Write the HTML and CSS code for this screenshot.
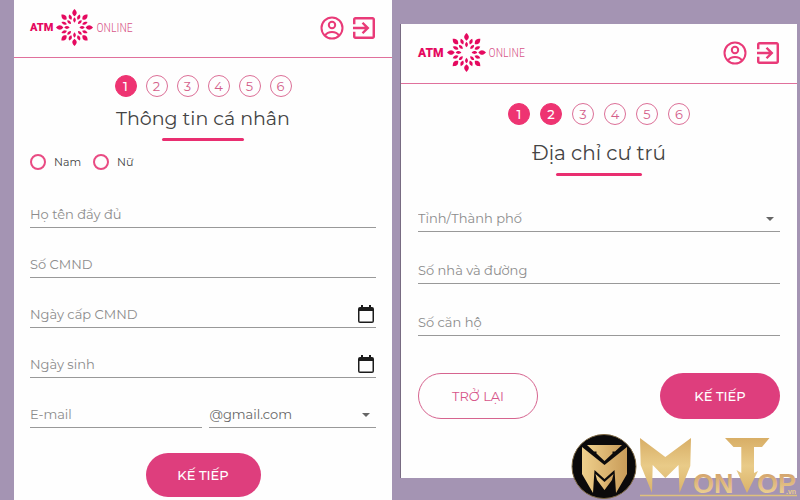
FILE: index.html
```html
<!DOCTYPE html>
<html lang="vi">
<head>
<meta charset="utf-8">
<meta name="viewport" content="width=device-width, initial-scale=1">
<title>ATM Online</title>
<link rel="stylesheet" href="styles.css">
</head>
<body>
<svg class="defs" aria-hidden="true">
  <defs>
    <g id="arm">
      <path d="M0-19C3-16 3-14 0-11.500C-3-14-3-16 0-19Z"/>
      <path d="M0-10.500C2-8.500 1.800-7 0-5C-1.800-7-2-8.500 0-10.500Z"/>
      <path transform="rotate(22.500)" d="M0-14.500C2.200-12 2-10.500 0-8.500C-2-10.500-2.200-12 0-14.500Z"/>
    </g>
    <symbol id="flower" viewBox="-19 -19 38 38">
      <use href="#arm"/>
      <use href="#arm" transform="rotate(45)"/>
      <use href="#arm" transform="rotate(90)"/>
      <use href="#arm" transform="rotate(135)"/>
      <use href="#arm" transform="rotate(180)"/>
      <use href="#arm" transform="rotate(225)"/>
      <use href="#arm" transform="rotate(270)"/>
      <use href="#arm" transform="rotate(315)"/>
    </symbol>
    <symbol id="user" viewBox="0 0 24 24">
      <g fill="none" stroke="currentColor" stroke-width="2">
        <circle cx="12" cy="12" r="10.500"/>
        <circle cx="12" cy="9" r="3.200"/>
        <path d="M5 19.500C8 14.800 16 14.800 19 19.500"/>
      </g>
    </symbol>
    <symbol id="exit" viewBox="3 3 18 18">
      <path fill="currentColor" d="M10.090 15.590L11.500 17l5-5-5-5-1.410 1.410L12.670 11H3v2h9.670l-2.580 2.590zM19 3H5c-1.110 0-2 .9-2 2v4h2V5h14v14H5v-4H3v4c0 1.100.890 2 2 2h14c1.100 0 2-.9 2-2V5c0-1.100-.9-2-2-2z"/>
    </symbol>
    <symbol id="calendar" viewBox="0 0 16 18">
      <path fill="currentColor" d="M2 2H3V0H5V2H11V0H13V2H14Q16 2 16 4V16Q16 18 14 18H2Q0 18 0 16V4Q0 2 2 2ZM1.500 6V16.500H14.500V6Z" fill-rule="evenodd"/>
    </symbol>
  </defs>
</svg>

<main class="screens">
  <section class="panel panel-personal">
    <header class="bar">
      <a class="brand" href="#" aria-label="ATM Online"><b>ATM</b><svg class="flower"><use href="#flower"/></svg><span>ONLINE</span></a>
      <nav class="actions">
        <button type="button" aria-label="Tài khoản"><svg><use href="#user"/></svg></button>
        <button type="button" aria-label="Thoát"><svg class="exit"><use href="#exit"/></svg></button>
      </nav>
    </header>
    <form class="form">
      <ol class="steps"><li class="done">1</li><li>2</li><li>3</li><li>4</li><li>5</li><li>6</li></ol>
      <h1>Thông tin cá nhân</h1>
      <div class="genders">
        <label><input type="radio" name="gender">Nam</label>
        <label><input type="radio" name="gender">Nữ</label>
      </div>
      <div class="field"><input type="text" aria-label="Họ tên đầy đủ" placeholder="Họ tên đầy đủ"></div>
      <div class="field"><input type="text" aria-label="Số CMND" placeholder="Số CMND"></div>
      <div class="field"><input type="text" aria-label="Ngày cấp CMND" placeholder="Ngày cấp CMND"><button class="pick" type="button" aria-label="Chọn ngày cấp"><svg><use href="#calendar"/></svg></button></div>
      <div class="field"><input type="text" aria-label="Ngày sinh" placeholder="Ngày sinh"><button class="pick" type="button" aria-label="Chọn ngày sinh"><svg><use href="#calendar"/></svg></button></div>
      <div class="pair">
        <div class="field"><input type="text" aria-label="E-mail" placeholder="E-mail"></div>
        <div class="field select"><select aria-label="Tên miền e-mail"><option>@gmail.com</option></select></div>
      </div>
      <div class="buttons center"><button class="btn primary" type="button">KẾ TIẾP</button></div>
    </form>
  </section>

  <section class="panel panel-address">
    <header class="bar">
      <a class="brand" href="#" aria-label="ATM Online"><b>ATM</b><svg class="flower"><use href="#flower"/></svg><span>ONLINE</span></a>
      <nav class="actions">
        <button type="button" aria-label="Tài khoản"><svg><use href="#user"/></svg></button>
        <button type="button" aria-label="Thoát"><svg class="exit"><use href="#exit"/></svg></button>
      </nav>
    </header>
    <form class="form">
      <ol class="steps"><li class="done">1</li><li class="done">2</li><li>3</li><li>4</li><li>5</li><li>6</li></ol>
      <h1>Địa chỉ cư trú</h1>
      <div class="field select empty"><select aria-label="Tỉnh/Thành phố"><option>Tỉnh/Thành phố</option></select></div>
      <div class="field"><input type="text" aria-label="Số nhà và đường" placeholder="Số nhà và đường"></div>
      <div class="field"><input type="text" aria-label="Số căn hộ" placeholder="Số căn hộ"></div>
      <div class="buttons"><button class="btn outline" type="button">TRỞ LẠI</button><button class="btn primary" type="button">KẾ TIẾP</button></div>
    </form>
  </section>
</main>

<svg class="watermark" viewBox="571 433 229 67" role="img" aria-label="MonTop.vn">
  <defs>
    <linearGradient id="gold" gradientUnits="userSpaceOnUse" x1="0" y1="438" x2="0" y2="494"><stop offset="0" stop-color="#d8ae66"/><stop offset=".5" stop-color="#e9cb88"/><stop offset="1" stop-color="#d9b168"/></linearGradient>
    <linearGradient id="word" gradientUnits="userSpaceOnUse" x1="0" y1="473" x2="0" y2="494"><stop offset="0" stop-color="#d3a36c"/><stop offset="1" stop-color="#ecd092"/></linearGradient>
    <linearGradient id="badge" x1="0" y1="0" x2="1" y2="0"><stop offset="0" stop-color="#efd08c"/><stop offset="1" stop-color="#c99c59"/></linearGradient>
  </defs>
  <circle cx="604" cy="466.500" r="32" fill="#0b0a0b" stroke="#7c6742"/>
  <g fill="url(#badge)">
    <path d="M587 445H622L615 451.500H612.500V453.500L604.500 461L596.500 453.500V451.500H594Z"/>
    <path d="M582 447L604.500 465L627 447V474L616 493L614.500 470L604.500 479L594.500 470L593 493L582 474Z"/>
    <path d="M595.500 474L604.500 482L613.500 474L612 480L604.500 490L597 480Z"/>
  </g>
  <g fill="url(#gold)">
    <path d="M640 438L665.300 457L691 438L690.300 466L679.500 493L678.500 465L665.300 478L652.700 465L652 493L640.700 465Z"/>
    <path d="M725 438H769.500L762 447H754V473L758 471L747 493L736.500 470L741.300 473V447H733.500Z"/>
  </g>
  <g class="wordmark" fill="url(#word)">
    <text x="693" y="493">ON</text>
    <text x="757" y="493">OP<tspan class="suffix" x="786" y="494">.vn</tspan></text>
  </g>
  <path d="M640 495.500H797" stroke="#dfc07c" stroke-width="1.500"/>
</svg>
</body>
</html>
```
FILE: styles.css
```css
* { box-sizing: border-box; }

body {
  margin: 0;
  background: #a494b3;
  color: #444;
  font-family: Montserrat, Inter, "Open Sans", sans-serif;
  font-size: 13px;
}

button, input, select { font: inherit; color: inherit; }
button { border: 0; padding: 0; background: none; cursor: pointer; }

.defs { position: absolute; width: 0; height: 0; }

.screens {
  display: grid;
  grid-template-columns: 378fr 396fr;
  gap: 9px;
  align-items: start;
  min-height: 100vh;
  padding: 0 3px 0 14px;
}

.panel { background: #fefefe; }
.panel-personal { min-height: 100vh; }
.panel-address { margin-top: 24px; box-shadow: -1px 0 #786b82; }

.bar {
  display: flex;
  align-items: center;
  justify-content: space-between;
  height: 58px;
  padding: 0 17px 2px 16px;
  border-bottom: 1px solid #e0709c;
}

.brand {
  display: flex;
  align-items: center;
  gap: 3px;
  color: #e5095f;
  text-decoration: none;
}
.brand b { font: 900 11px/16px Roboto, sans-serif; }
.brand span { font: 300 12px/16px "Roboto Condensed", Roboto, sans-serif; color: #d8558a; }
.flower { width: 37px; height: 37px; fill: #e5095f; }

.actions { display: flex; align-items: center; gap: 9px; color: #e93a78; }
.actions svg { display: block; width: 24px; height: 24px; }
.actions .exit { width: 22px; height: 22px; }

.form { display: flex; flex-direction: column; padding: 17px 16px 0; }

.steps {
  display: flex;
  justify-content: center;
  gap: 9px;
  margin: 0;
  padding: 0;
  list-style: none;
}
.steps li {
  width: 22px;
  height: 22px;
  border: 1px solid #dc6f97;
  border-radius: 50%;
  color: #d4608b;
  line-height: 20px;
  text-align: center;
}
.steps .done { border-color: #ee3472; background: #ee3472; color: #fff; font-weight: 500; }

h1 {
  margin: 8px 0 0;
  color: #444;
  font-size: 19px;
  font-weight: 400;
  line-height: 28px;
  text-align: center;
}
h1::after {
  content: "";
  display: block;
  width: 82px;
  height: 3px;
  margin: 5px auto 0;
  border-radius: 2px;
  background: #e92e70;
}

.genders { display: flex; gap: 12px; height: 16px; margin: 13px 0 9px; font-size: 11px; }
.genders label { display: flex; align-items: center; gap: 8px; }
.genders input {
  appearance: none;
  width: 16px;
  height: 16px;
  margin: 0;
  border: 2px solid #e94b83;
  border-radius: 50%;
}

.field {
  display: flex;
  align-items: flex-end;
  height: 50px;
  padding-bottom: 1px;
}
.field input, .field select {
  flex: 1;
  min-width: 0;
  width: 100%;
  height: 26px;
  padding: 0 0 2px;
  border: 0;
  border-bottom: 1px solid #999;
  border-radius: 0;
  outline: 0;
  background: none;
}
.field input::placeholder { color: #8c8c8c; opacity: 1; }

.select { position: relative; }
.field select { appearance: none; color: #666; }
.field.empty select { color: #8c8c8c; }
.select::after {
  content: "";
  position: absolute;
  right: 6px;
  bottom: 12px;
  border: 4px solid transparent;
  border-top-color: #666;
  border-bottom: 0;
}

.pick {
  align-self: stretch;
  display: flex;
  align-items: flex-end;
  padding: 0 2px 4px 0;
  border-bottom: 1px solid #999;
  color: #1c1c1c;
}
.pick svg { width: 16px; height: 18px; }

.pair { display: grid; grid-template-columns: 173fr 167fr; gap: 7px; }

.buttons { display: flex; justify-content: space-between; margin: 24px 0 0; }
.center { justify-content: center; }
.btn {
  width: 115px;
  height: 44px;
  border-radius: 23px;
  font-size: 13px;
}
.primary { background: #de3e7d; color: #fff; font-weight: 500; }
.outline { border: 1px solid #d6648f; color: #d6558a; }

.panel-address .bar { height: 60px; padding: 0 18px 2px 17px; }
.panel-address .brand b { font-size: 12px; }
.panel-address .flower { width: 39px; height: 39px; }
.panel-address .actions { gap: 10px; }
.panel-address .form { padding: 19px 17px 0; }
.panel-address .steps { gap: 10px; }
.panel-address h1 { margin: 14px 0 5px; font-size: 20px; }
.panel-address h1::after { width: 86px; margin-top: 6px; }
.panel-address .field { height: 52px; }
.panel-address .buttons { margin: 36px 0 59px; }
.panel-address .btn { width: 120px; height: 46px; }

.watermark { position: absolute; right: 0; bottom: 0; width: 229px; height: 67px; }
.wordmark { font: bold 27px "Liberation Sans", Arial, sans-serif; }
.suffix { font-size: 7px; }
```
